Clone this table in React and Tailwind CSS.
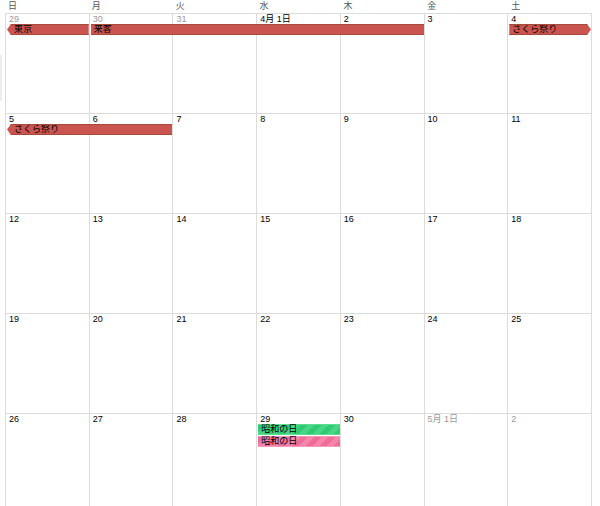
import React from "react";

const weekdays = ["日", "月", "火", "水", "木", "金", "土"];

const weeks = [
  {
    days: [
      { t: "29", g: true }, { t: "30", g: true }, { t: "31", g: true },
      { t: "4月 1日" }, { t: "2" }, { t: "3" }, { t: "4" },
    ],
    events: [
      { start: 1, span: 1, label: "東京", left: true },
      { start: 2, span: 4, label: "来客" },
      { start: 7, span: 1, label: "さくら祭り", right: true },
    ],
  },
  {
    days: [{ t: "5" }, { t: "6" }, { t: "7" }, { t: "8" }, { t: "9" }, { t: "10" }, { t: "11" }],
    events: [{ start: 1, span: 2, label: "さくら祭り", left: true }],
  },
  {
    days: [{ t: "12" }, { t: "13" }, { t: "14" }, { t: "15" }, { t: "16" }, { t: "17" }, { t: "18" }],
    events: [],
  },
  {
    days: [{ t: "19" }, { t: "20" }, { t: "21" }, { t: "22" }, { t: "23" }, { t: "24" }, { t: "25" }],
    events: [],
  },
  {
    days: [
      { t: "26" }, { t: "27" }, { t: "28" }, { t: "29" }, { t: "30" },
      { t: "5月 1日", g: true }, { t: "2", g: true },
    ],
    events: [],
    stacked: true,
  },
];

const colStart = ["col-start-1", "col-start-2", "col-start-3", "col-start-4", "col-start-5", "col-start-6", "col-start-7"];
const colSpan = ["col-span-1", "col-span-2", "col-span-3", "col-span-4", "col-span-5", "col-span-6", "col-span-7"];

function RedBar({ ev }) {
  let clip = "";
  if (ev.left) clip = "[clip-path:polygon(4px_0,100%_0,100%_100%,4px_100%,0_50%)]";
  else if (ev.right) clip = "[clip-path:polygon(0_0,calc(100%-4px)_0,100%_50%,calc(100%-4px)_100%,0_100%)]";
  return (
    <div
      className={`${colStart[ev.start - 1]} ${colSpan[ev.span - 1]} ml-[1px] mr-[1px] h-[11px] ${clip}`}
    >
      <div className={`h-full ${ev.left ? "pl-[7px]" : "pl-[3px]"} bg-[#ca5550] border-y border-[#a84a3a] text-[9px] leading-[9px] text-black overflow-hidden whitespace-nowrap`}>
        {ev.label}
      </div>
    </div>
  );
}

export default function App() {
  return (
    <div className="w-[600px] h-[506px] overflow-hidden bg-white relative font-['Liberation_Sans','Noto_Sans_CJK_JP',sans-serif]">
      <div className="absolute left-0 top-[55px] w-[2px] h-[46px] bg-[#ececec]" />
      <div className="ml-[5px] w-[587px]">
        <div className="grid grid-cols-7 h-[13px]">
          {weekdays.map((w) => (
            <div key={w} className="pl-[3px] text-[9px] leading-[10px] pt-[1px] text-[#555]">
              {w}
            </div>
          ))}
        </div>
        <div className="border-l border-t border-[#dcdcdc]">
          {weeks.map((wk, i) => (
            <div key={i} className="relative h-[100px]">
              <div className="grid grid-cols-7 h-full">
                {wk.days.map((d, j) => (
                  <div key={j} className="border-r border-b border-[#dcdcdc]" />
                ))}
              </div>
              <div className="absolute inset-0 grid grid-cols-7 content-start">
                {wk.days.map((d, j) => (
                  <div
                    key={j}
                    className={`pl-[3px] pt-[1px] h-[10px] text-[9px] leading-[9px] ${d.g ? "text-[#999]" : "text-black"}`}
                  >
                    {d.t}
                  </div>
                ))}
                {wk.events.map((ev, k) => (
                  <RedBar key={k} ev={ev} />
                ))}
                {wk.stacked && (
                  <>
                    <div className="col-start-4 col-span-1 mx-[1px] h-[11px] border-y border-[#5fdc93] bg-[repeating-linear-gradient(135deg,#2fcb72_0px,#2fcb72_5px,#48d585_5px,#48d585_10px)] pl-[3px] text-[9px] leading-[9px] text-black whitespace-nowrap">
                      昭和の日
                    </div>
                    <div className="col-span-7 h-[1px]" />
                    <div className="col-start-4 col-span-1 mx-[1px] h-[11px] border-y border-[#f59ab8] bg-[repeating-linear-gradient(135deg,#f06c98_0px,#f06c98_5px,#f585aa_5px,#f585aa_10px)] pl-[3px] text-[9px] leading-[9px] text-black whitespace-nowrap">
                      昭和の日
                    </div>
                  </>
                )}
              </div>
            </div>
          ))}
        </div>
      </div>
    </div>
  );
}
